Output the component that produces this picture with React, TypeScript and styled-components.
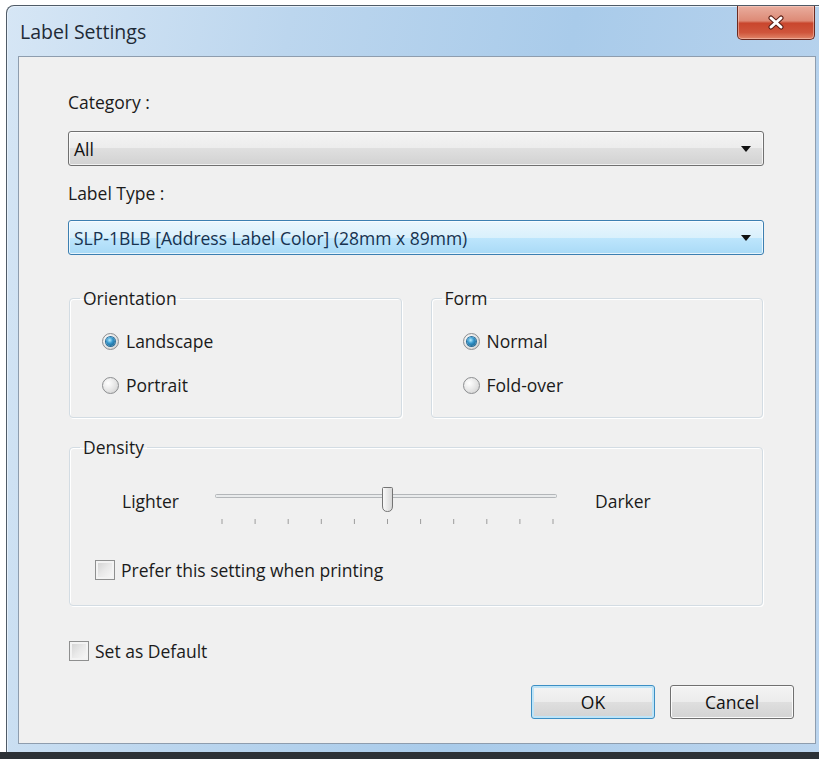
import React from "react";
import styled, { createGlobalStyle } from "styled-components";

const GlobalStyle = createGlobalStyle`
  html, body {
    margin: 0;
    padding: 0;
    overflow: hidden;
    background: #ffffff;
  }
  body {
    font-family: "Open Sans", "Noto Sans", "Liberation Sans", sans-serif;
    color: #1b1b1b;
  }
`;

const TICKS = Array.from({ length: 11 }, (_, i) => 11 + i * 33.1);

const App = () => {
  return (
    <Page>
      <GlobalStyle />
      <Window>
        <TitleBar>
          <Title>Label Settings</Title>
          <CloseButton aria-label="Close">
            <svg width="18" height="15" viewBox="0 0 18 15">
              <path d="M4 3 L14 12 M14 3 L4 12" stroke="#5a1d14" strokeWidth="5" strokeLinecap="round" />
              <path d="M4 3 L14 12 M14 3 L4 12" stroke="#ffffff" strokeWidth="3" strokeLinecap="round" />
            </svg>
          </CloseButton>
        </TitleBar>

        <Client>
          <Main>
            <FieldLabel>Category :</FieldLabel>
            <Select $variant="plain">
              <span>All</span>
              <Arrow />
            </Select>

            <FieldLabel $gap>Label Type :</FieldLabel>
            <Select $variant="hot">
              <span>SLP-1BLB [Address Label Color] (28mm x 89mm)</span>
              <Arrow />
            </Select>

            <GroupRow>
              <Group>
                <Legend>Orientation</Legend>
                <Options>
                  <Option $indent={32}>
                    <Radio $checked />
                    Landscape
                  </Option>
                  <Option $indent={32}>
                    <Radio />
                    Portrait
                  </Option>
                </Options>
              </Group>
              <Group>
                <Legend>Form</Legend>
                <Options>
                  <Option $indent={31}>
                    <Radio $checked />
                    Normal
                  </Option>
                  <Option $indent={31}>
                    <Radio />
                    Fold-over
                  </Option>
                </Options>
              </Group>
            </GroupRow>

            <DensityGroup>
              <Legend>Density</Legend>
              <SliderRow>
                <SliderLabel $width={89}>Lighter</SliderLabel>
                <svg width="350" height="42" viewBox="0 0 350 42">
                  <defs>
                    <linearGradient id="thumb" x1="0" y1="0" x2="1" y2="0">
                      <stop offset="0" stopColor="#fbfbfb" />
                      <stop offset="1" stopColor="#d6d6d6" />
                    </linearGradient>
                  </defs>
                  <rect x="4.5" y="8.5" width="341" height="3" rx="1" fill="#e9ebec" stroke="#b3b6b9" />
                  {TICKS.map((x) => (
                    <line key={x} x1={x} y1="33" x2={x} y2="38" stroke="#9c9c9c" strokeWidth="1" />
                  ))}
                  <path
                    d="M171.5 2.5 Q171.5 1.5 172.5 1.5 H180.5 Q181.5 1.5 181.5 2.5 V20 Q181.5 25.5 176.5 25.5 Q171.5 25.5 171.5 20 Z"
                    fill="url(#thumb)"
                    stroke="#747474"
                  />
                </svg>
                <SliderLabel $gap={34}>Darker</SliderLabel>
              </SliderRow>
              <CheckRow $indent={25} $top={30}>
                <CheckBox />
                Prefer this setting when printing
              </CheckRow>
            </DensityGroup>

            <CheckRow $indent={1} $top={33}>
              <CheckBox />
              Set as Default
            </CheckRow>
          </Main>

          <Buttons>
            <Button $default>OK</Button>
            <Button>Cancel</Button>
          </Buttons>
        </Client>
      </Window>
      <Taskbar />
    </Page>
  );
};

const Arrow = () => (
  <svg width="10" height="6" viewBox="0 0 10 6">
    <path d="M0 0 H10 L5 6 Z" fill="#111111" />
  </svg>
);

const Page = styled.div`
  display: flex;
  flex-direction: column;
  height: 100vh;
`;

const Window = styled.div`
  flex: none;
  box-sizing: border-box;
  display: flex;
  flex-direction: column;
  width: 822px;
  height: 747px;
  margin: 5px 0 0 6px;
  padding: 0 11px 7px;
  border: 1px solid #4f5b67;
  border-bottom: none;
  border-radius: 8px 8px 0 0;
  background: linear-gradient(100deg, #d6e6f5 0%, #bcd6ee 30%, #a9cbea 60%, #bcd5ee 100%);
  box-shadow: inset 1px 1px 0 #e6f0fa;
`;

const TitleBar = styled.div`
  height: 50px;
  display: flex;
  justify-content: space-between;
  align-items: flex-start;
`;

const Title = styled.div`
  margin: 13px 0 0 2px;
  font-size: 19.5px;
  line-height: 26px;
  color: #1e2a36;
`;

const CloseButton = styled.div`
  box-sizing: border-box;
  width: 78px;
  height: 34px;
  margin-right: 1px;
  display: flex;
  align-items: center;
  justify-content: center;
  border: 1px solid #6b2a20;
  border-top: none;
  border-radius: 0 0 5px 5px;
  background: linear-gradient(
    180deg,
    #e9ad9e 0%,
    #dd8a76 45%,
    #c9462d 52%,
    #cf553b 80%,
    #e18568 100%
  );
  box-shadow: inset 0 0 0 1px rgba(255, 220, 210, 0.45);
`;

const Client = styled.div`
  box-sizing: border-box;
  height: 688px;
  display: flex;
  flex-direction: column;
  padding: 33px 21px 24px 49px;
  border: 1px solid #8e9dae;
  background: #f0f0f0;
`;

const Main = styled.div`
  display: flex;
  flex-direction: column;
  margin-right: 30px;
`;

const FieldLabel = styled.div<{ $gap?: boolean }>`
  margin-top: ${(p) => (p.$gap ? 15 : 0)}px;
  font-size: 17.5px;
  line-height: 24px;
`;

const Select = styled.div<{ $variant: "plain" | "hot" }>`
  box-sizing: border-box;
  height: 35px;
  margin-top: ${(p) => (p.$variant === "hot" ? 15 : 17)}px;
  display: flex;
  align-items: center;
  justify-content: space-between;
  padding: 0 12px 0 5px;
  font-size: 17.5px;
  border-radius: 3px;
  border: 1px solid ${(p) => (p.$variant === "hot" ? "#3c7fb1" : "#707070")};
  color: ${(p) => (p.$variant === "hot" ? "#17324f" : "#111111")};
  background: ${(p) =>
    p.$variant === "hot"
      ? "linear-gradient(180deg, #eaf6fd 0%, #d9f0fc 50%, #bee6fd 50%, #a9daf6 100%)"
      : "linear-gradient(180deg, #f4f4f4 0%, #ececec 50%, #dfdfdf 50%, #d2d2d2 100%)"};
  box-shadow: inset 0 0 0 1px rgba(255, 255, 255, 0.7);
`;

const GroupRow = styled.div`
  display: flex;
  gap: 29px;
  margin: 32px 1px 0;
`;

const Group = styled.fieldset`
  flex: 1;
  min-width: 0;
  margin: 0;
  padding: 20px 0 20px;
  border: 1px solid #d3dce3;
  border-radius: 4px;
  box-shadow: inset 1px 1px 0 #ffffff, 1px 1px 0 #ffffff;
`;

const DensityGroup = styled(Group)`
  flex: none;
  margin: 18px 1px 0;
  padding: 28px 0 23px;
`;

const Legend = styled.legend`
  margin-left: 10px;
  padding: 0 3px;
  font-size: 17.5px;
  line-height: 22px;
  color: #1b1b1b;
`;

const Options = styled.div`
  display: flex;
  flex-direction: column;
  gap: 20px;
`;

const Option = styled.div<{ $indent: number }>`
  display: flex;
  align-items: center;
  gap: 7px;
  height: 24px;
  padding-left: ${(p) => p.$indent}px;
  font-size: 17.5px;
`;

const Radio = styled.span<{ $checked?: boolean }>`
  box-sizing: border-box;
  flex: none;
  width: 17px;
  height: 17px;
  display: inline-flex;
  align-items: center;
  justify-content: center;
  border-radius: 50%;
  border: 1px solid #8c8e90;
  background: radial-gradient(circle at 35% 35%, #ffffff 0%, #e4e4e4 55%, #c9c9c9 100%);

  &::after {
    content: "";
    display: ${(p) => (p.$checked ? "block" : "none")};
    width: 9px;
    height: 9px;
    border-radius: 50%;
    background: radial-gradient(circle at 40% 35%, #b5ecff 0%, #3596cc 40%, #0c4f78 100%);
    box-shadow: 0 0 0 1px #2a6e99;
  }
`;

const SliderRow = styled.div`
  display: flex;
  align-items: flex-start;
  padding-left: 52px;
`;

const SliderLabel = styled.div<{ $width?: number; $gap?: number }>`
  width: ${(p) => (p.$width ? `${p.$width}px` : "auto")};
  margin: 3px 0 0 ${(p) => p.$gap ?? 0}px;
  font-size: 17.5px;
  line-height: 24px;
`;

const CheckRow = styled.div<{ $indent: number; $top: number }>`
  display: flex;
  align-items: center;
  gap: 6px;
  height: 24px;
  margin-top: ${(p) => p.$top}px;
  padding-left: ${(p) => p.$indent}px;
  font-size: 17.5px;
`;

const CheckBox = styled.span`
  box-sizing: border-box;
  flex: none;
  width: 20px;
  height: 20px;
  border: 1px solid #8e8f8f;
  background: linear-gradient(135deg, #cfcfcf 0%, #e9e9e9 50%, #fafafa 100%);
  box-shadow: inset 0 0 0 2px #f3f3f3;
`;

const Buttons = styled.div`
  margin-top: auto;
  display: flex;
  justify-content: flex-end;
  gap: 15px;
`;

const Button = styled.div<{ $default?: boolean }>`
  box-sizing: border-box;
  width: 124px;
  height: 34px;
  display: flex;
  align-items: center;
  justify-content: center;
  font-size: 17.5px;
  color: #111111;
  border-radius: 3px;
  border: 1px solid ${(p) => (p.$default ? "#3c8fc4" : "#707070")};
  background: linear-gradient(180deg, #f4f4f4 0%, #ececec 50%, #dfdfdf 50%, #d3d3d3 100%);
  box-shadow: ${(p) =>
    p.$default ? "inset 0 0 0 2px #bfe4f7" : "inset 0 0 0 1px #fbfbfb"};
`;

const Taskbar = styled.div`
  flex: 1;
  background: #2c3136;
`;

export default App;
